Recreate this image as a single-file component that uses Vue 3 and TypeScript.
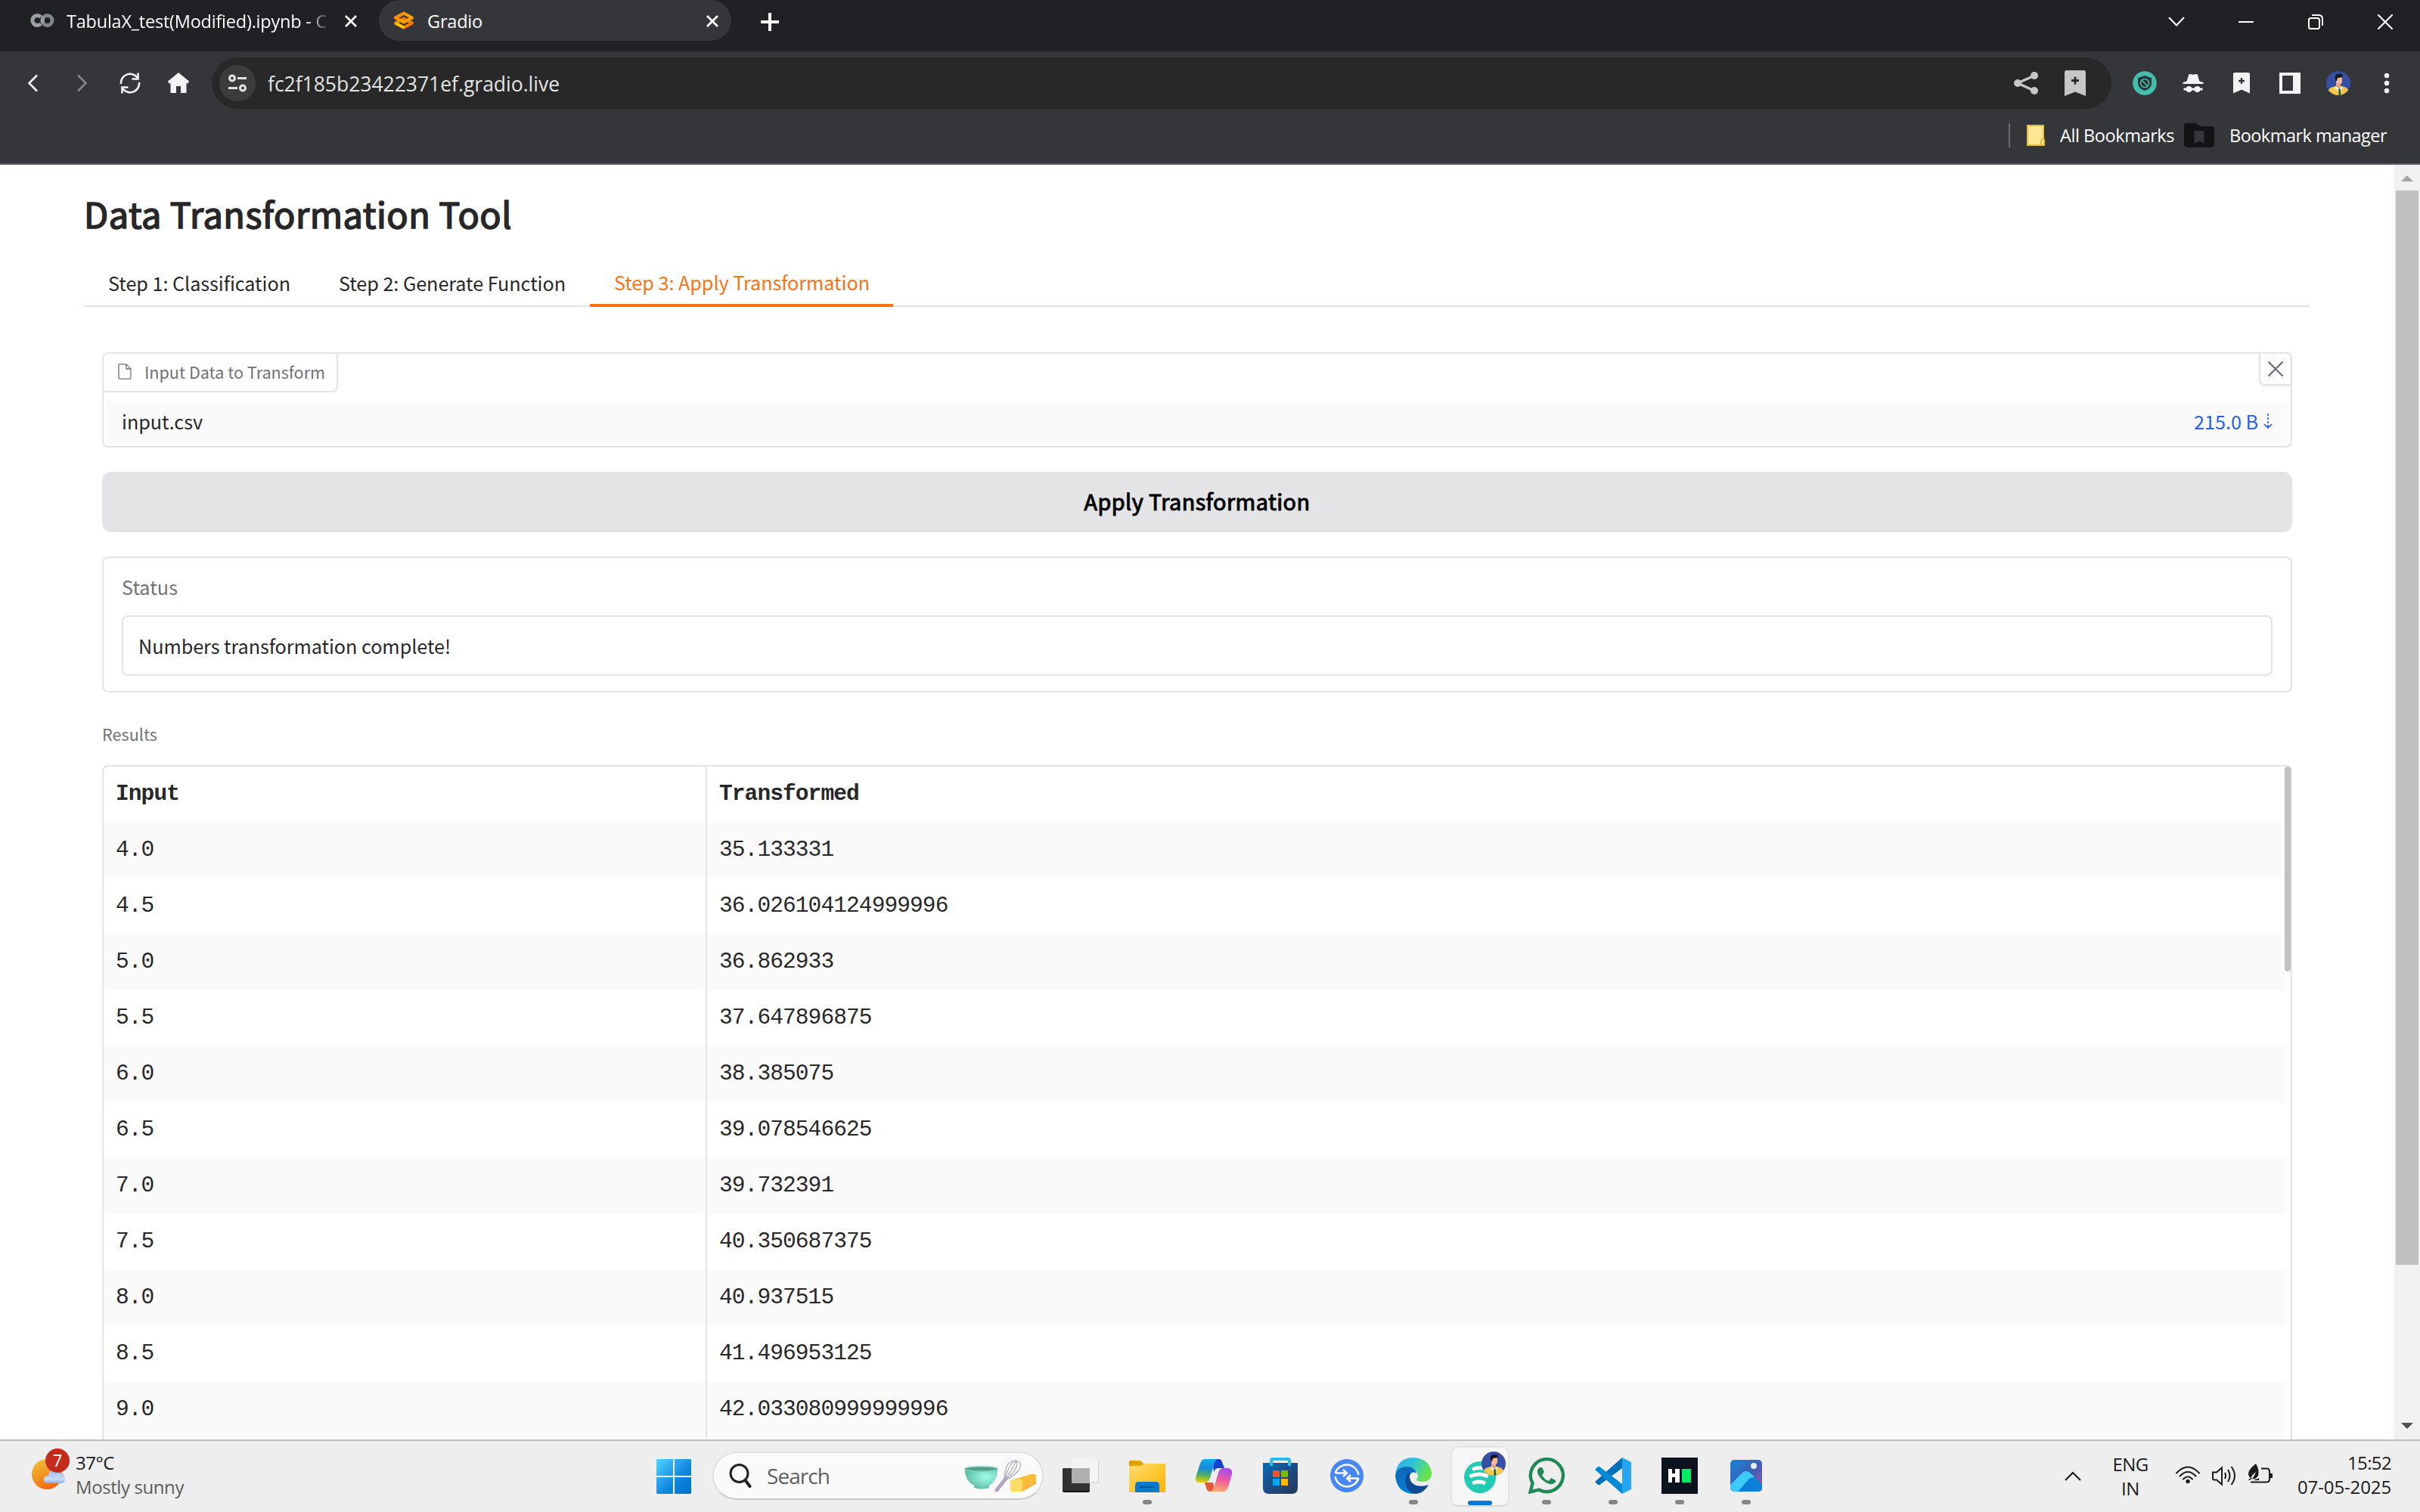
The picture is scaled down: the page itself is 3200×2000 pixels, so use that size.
<script setup lang="ts">
import type { Directive } from 'vue'

interface Row {
  input: string
  output: string
}

const rows: Row[] = [
  { input: '4.0', output: '35.133331' },
  { input: '4.5', output: '36.026104124999996' },
  { input: '5.0', output: '36.862933' },
  { input: '5.5', output: '37.647896875' },
  { input: '6.0', output: '38.385075' },
  { input: '6.5', output: '39.078546625' },
  { input: '7.0', output: '39.732391' },
  { input: '7.5', output: '40.350687375' },
  { input: '8.0', output: '40.937515' },
  { input: '8.5', output: '41.496953125' },
  { input: '9.0', output: '42.033080999999996' },
]

// Tracks a label in or out so that it takes the given advance width.
const vFit: Directive<HTMLElement, number> = {
  mounted(el, { value }) {
    const count = (el.textContent ?? '').length
    const natural = el.getBoundingClientRect().width
    el.style.letterSpacing = `${(value - natural) / count}px`
  },
}
</script>

<template>
  <div class="screen">
    <svg class="defs" width="0" height="0">
      <symbol id="avatar" viewBox="0 0 32 32">
        <clipPath id="round"><circle cx="16" cy="16" r="16" /></clipPath>
        <g clip-path="url(#round)">
          <rect width="32" height="32" fill="#364fa3" />
          <path d="M2 32v-5q1-5 10-7h9q8 2 9 7v5z" fill="#f8c64b" />
          <path d="M13 14h6v8l-3 2-3-2z" fill="#e8a184" />
          <path d="M12 20l5 3 4-3v3l-3 2-6-1z" fill="#fff" />
          <path d="M16.500 23h2l1 9h-3z" fill="#14614a" />
          <rect x="13" y="6" width="8" height="11" rx="3.500" fill="#f4b79b" />
          <path d="M12 13V8q-1-2 1-3 4-2 8-1l1 4-7 1-1 4z" fill="#17181c" />
        </g>
      </symbol>
    </svg>

    <header class="tabstrip">
      <div class="tab tab-colab">
        <svg width="32" height="20" viewBox="0 0 32 20" fill="none" stroke-width="5">
          <path d="M14 5.500A6.500 6.500 0 1 0 14 14.500" stroke="#9aa0a6" />
          <circle cx="22.500" cy="10" r="6.500" stroke="#80868b" />
          <path d="M17 13.500a6.500 6.500 0 0 1 1-8" stroke="#9aa0a6" />
        </svg>
        <span class="tab-title faded"><span v-fit="344">TabulaX_test(Modified).ipynb - C</span></span>
        <svg class="tab-x" width="18" height="18" viewBox="0 0 18 18"><path d="M2 2l14 14M16 2L2 16" stroke="#fff" stroke-width="2.800" /></svg>
      </div>
      <div class="tab tab-gradio">
        <svg width="28" height="24" viewBox="0 0 28 24" fill="none" stroke-width="4" stroke-linejoin="round">
          <path d="M3 15.500l11-6 11 6-11 6z" stroke="#ff7c00" />
          <path d="M3 8.500l11-6 11 6-11 6z" stroke="#ffa000" />
          <path d="M3 15.500l11 6" stroke="#ffc400" />
          <path d="M3 8.500l11-6" stroke="#ff8a00" />
        </svg>
        <span class="tab-title"><span v-fit="73">Gradio</span></span>
        <svg class="tab-x" width="18" height="18" viewBox="0 0 18 18"><path d="M2 2l14 14M16 2L2 16" stroke="#fff" stroke-width="2.800" /></svg>
      </div>
      <svg class="new-tab" width="26" height="26" viewBox="0 0 26 26"><path d="M13 1v24M1 13h24" stroke="#fff" stroke-width="4" /></svg>
      <div class="window-buttons">
        <span><svg width="24" height="16" viewBox="0 0 24 16"><path d="M2 2l10 10.500L22 2" fill="none" stroke="#fff" stroke-width="2" /></svg></span>
        <span><svg width="20" height="20" viewBox="0 0 20 20"><path d="M0 10h20" stroke="#fff" stroke-width="2" /></svg></span>
        <span>
          <svg width="20" height="20" viewBox="0 0 20 20" fill="none" stroke="#fff" stroke-width="2">
            <rect x="1" y="5" width="14" height="14" rx="2.500" /><path d="M5 1h9q5 0 5 5v9" />
          </svg>
        </span>
        <span><svg width="20" height="20" viewBox="0 0 20 20"><path d="M0 0l20 20M20 0L0 20" stroke="#fff" stroke-width="2" /></svg></span>
      </div>
    </header>

    <div class="toolbar">
      <nav class="nav-icons">
        <span><svg width="24" height="24" viewBox="0 0 24 24"><path d="M17 1.500L6.500 12 17 22.500" fill="none" stroke="#f1f3f4" stroke-width="2.600" /></svg></span>
        <span><svg width="24" height="24" viewBox="0 0 24 24"><path d="M7 1.500L17.500 12 7 22.500" fill="none" stroke="#85868a" stroke-width="2.600" /></svg></span>
        <span>
          <svg width="28" height="28" viewBox="0 0 28 28" fill="none" stroke="#f1f3f4" stroke-width="2.600">
            <path d="M2 15A12 12 0 0 1 23.500 6.500M24.500 0.500v8h-8M26 13A12 12 0 0 1 4.500 21.500M3.500 27.500v-8h8" />
          </svg>
        </span>
        <span><svg width="28" height="28" viewBox="0 0 28 28"><path d="M14 0L28 11.500l-1.500 3-2-.5V27h-7.500v-9h-6v9H3.500V14l-2 .5L0 11.500z" fill="#f1f3f4" /></svg></span>
      </nav>
      <div class="omnibox">
        <span class="site-info">
          <svg width="26" height="24" viewBox="0 0 26 24" fill="none" stroke="#e3e3e3" stroke-width="3">
            <circle cx="6" cy="5.500" r="3.500" /><path d="M13 5.500h12M1 18.500h12" /><circle cx="20" cy="18.500" r="3.500" />
          </svg>
        </span>
        <span class="url"><span v-fit="386">fc2f185b23422371ef.gradio.live</span></span>
        <svg class="share" width="34" height="30" viewBox="0 0 34 30" fill="#c7c7c7">
          <path d="M28 5L6 15l22 10" fill="none" stroke="#c7c7c7" stroke-width="3.500" />
          <circle cx="6" cy="15" r="5" /><circle cx="28" cy="5" r="5" /><circle cx="28" cy="25" r="5" />
        </svg>
        <svg width="28" height="34" viewBox="0 0 28 34">
          <path d="M3 0h22q3 0 3 3v31L14 28.500 0 34V3q0-3 3-3z" fill="#c7c7c7" /><path d="M14 8.500v10M9 13.500h10" stroke="#282828" stroke-width="2.800" />
        </svg>
      </div>
      <div class="extensions">
        <span>
          <svg width="32" height="32" viewBox="0 0 32 32" fill="none">
            <circle cx="16" cy="16" r="15.800" fill="#45bdac" />
            <path d="M16 6l9 3v7q0 7-9 10-9-3-9-10V9z" fill="#2c3135" />
            <circle cx="16" cy="16" r="5.500" stroke="#45bdac" stroke-width="1.600" /><path d="M12 12l8 8" stroke="#45bdac" stroke-width="1.600" />
          </svg>
        </span>
        <span>
          <svg width="28" height="26" viewBox="0 0 28 26" fill="#f1f3f4">
            <path d="M8.500 1h2l3.500.8L17.500 1h2l3 9.500 5 1.500v2H.5v-2l5-1.500z" />
            <circle cx="8.500" cy="21" r="4" /><circle cx="19.500" cy="21" r="4" /><path d="M1.500 19.500h25v3h-25z" />
          </svg>
        </span>
        <span>
          <svg width="22" height="28" viewBox="0 0 22 28">
            <path d="M2 0h18q2 0 2 2v25.500L11 22.500 0 27.500V2q0-2 2-2z" fill="#f1f3f4" /><path d="M11 7v8M7 11h8" stroke="#35363a" stroke-width="2.400" />
          </svg>
        </span>
        <span><svg width="28" height="28" viewBox="0 0 28 28"><path d="M0 0h28v28H0zM4 4v20h14V4z" fill="#f1f3f4" fill-rule="evenodd" /></svg></span>
        <span><svg width="32" height="32"><use href="#avatar" /></svg></span>
        <span><svg width="8" height="28" viewBox="0 0 8 28" fill="#f1f3f4"><circle cx="4" cy="4" r="3.200" /><circle cx="4" cy="14" r="3.200" /><circle cx="4" cy="24" r="3.200" /></svg></span>
      </div>
    </div>

    <div class="bookmarks">
      <i class="divider"></i>
      <svg width="24" height="28" viewBox="0 0 24 28"><path d="M1 1h21v18l1 1v7H1z" fill="#ffe793" stroke="#e9bd3f" stroke-width="2" /><path d="M19 27v-7q0-1 3-1" fill="none" stroke="#e9bd3f" stroke-width="2" /></svg>
      <span class="all"><span v-fit="151">All Bookmarks</span></span>
      <svg class="dark-folder" width="42" height="34" viewBox="0 0 42 34"><path d="M4 1h13l5 4h15q4 0 4 4v19q0 5-5 5H6q-5 0-5-5V4q0-3 3-3z" fill="#121314" /><path d="M14.500 11h13v17L21 24.500 14.500 28z" fill="#35363a" /></svg>
      <span class="manager"><span v-fit="208">Bookmark manager</span></span>
    </div>

    <div class="viewport">
      <main class="page">
        <h1><span v-fit="566">Data Transformation Tool</span></h1>
        <nav class="steps">
          <button><span v-fit="241">Step 1: Classification</span></button>
          <button><span v-fit="300">Step 2: Generate Function</span></button>
          <button class="active"><span v-fit="338">Step 3: Apply Transformation</span></button>
        </nav>

        <div class="panel">
          <section class="file">
            <div class="file-head">
              <div class="file-label">
                <svg width="18" height="21" viewBox="0 0 18 21" fill="none" stroke="#71717a" stroke-width="1.300">
                  <path d="M2.500.8H11L17 7v12q0 1.200-1.500 1.200H2.500Q1 20.200 1 19V2Q1 .8 2.500.8zM11 .8V7h6" />
                </svg>
                <span v-fit="239">Input Data to Transform</span>
              </div>
              <button class="clear"><svg width="22" height="22" viewBox="0 0 22 22"><path d="M1.500 1.500l19 19M20.500 1.500l-19 19" stroke="#6b6b75" stroke-width="2.200" /></svg></button>
            </div>
            <div class="file-row">
              <span v-fit="107">input.csv</span>
              <a class="size"><span v-fit="85">215.0 B</span>
                <svg width="12" height="22" viewBox="0 0 12 22" fill="none" stroke="#2563eb" stroke-width="1.700"><path d="M6 1v18" stroke-dasharray="3 2" /><path d="M1 15l5 5 5-5" /></svg>
              </a>
            </div>
          </section>

          <button class="apply"><span v-fit="299">Apply Transformation</span></button>

          <section class="status">
            <label><span v-fit="74">Status</span></label>
            <div class="field"><span v-fit="413">Numbers transformation complete!</span></div>
          </section>

          <p class="results-label"><span v-fit="73">Results</span></p>

          <section class="table">
            <div class="cells">
              <div class="tr th"><span>Input</span><span>Transformed</span></div>
              <div v-for="row in rows" :key="row.input" class="tr">
                <span>{{ row.input }}</span><span>{{ row.output }}</span>
              </div>
            </div>
            <div class="table-thumb"></div>
          </section>
        </div>
      </main>
      <aside class="scrollbar">
        <svg width="16" height="8" viewBox="0 0 16 8"><path d="M0 8L8 0l8 8z" fill="#a3a3a3" /></svg>
        <i></i>
        <svg class="down" width="16" height="8" viewBox="0 0 16 8"><path d="M0 0l8 8 8-8z" fill="#505050" /></svg>
      </aside>
    </div>

    <footer class="taskbar">
      <div class="weather">
        <svg width="52" height="56" viewBox="0 0 52 56">
          <defs>
            <linearGradient id="sun" x1="0.200" y1="0" x2="0.700" y2="1"><stop offset="0" stop-color="#edc037" /><stop offset="1" stop-color="#f4640b" /></linearGradient>
            <linearGradient id="cloud" x1="0" y1="0" x2="0" y2="1"><stop offset="0" stop-color="#9fbdf0" /><stop offset=".7" stop-color="#c9dbf7" /><stop offset="1" stop-color="#88aeed" /></linearGradient>
          </defs>
          <circle cx="20" cy="34" r="20" fill="url(#sun)" />
          <path d="M22 46q-6 0-6-5t6-5q1-8 8-8 6 0 8 5 6 0 6 7 0 6-6 6z" fill="url(#cloud)" />
          <circle cx="34" cy="16" r="16" fill="#c42b1c" />
          <text x="34" y="24" text-anchor="middle" font-size="22" fill="#fff">7</text>
        </svg>
        <div class="weather-text">
          <span><b v-fit="51">37°C</b></span>
          <span class="dim"><b v-fit="143">Mostly sunny</b></span>
        </div>
      </div>

      <svg class="start" width="46" height="46" viewBox="0 0 46 46">
        <defs><linearGradient id="win" x1="0" y1="0" x2="1" y2="1"><stop offset="0" stop-color="#4fd5ff" /><stop offset=".6" stop-color="#0d86dc" /><stop offset="1" stop-color="#0070cc" /></linearGradient></defs>
        <path d="M1 0h21v22H0V1zM24 0h21l1 1v21H24zM0 24h22v22H1l-1-1zM24 24h22v21l-1 1H24z" fill="url(#win)" />
      </svg>

      <div class="search">
        <svg width="30" height="32" viewBox="0 0 30 32" fill="none" stroke="#222">
          <circle cx="13.500" cy="13" r="11.500" stroke-width="3" /><path d="M21.500 22l6 8" stroke-width="4" stroke-linecap="round" />
        </svg>
        <span class="search-text"><span v-fit="83">Search</span></span>
        <svg class="bake" width="96" height="44" viewBox="0 0 96 44" fill="none">
          <defs>
            <radialGradient id="bowl" cx=".65" cy=".4" r=".7"><stop offset="0" stop-color="#a0ffe8" /><stop offset="1" stop-color="#5bb79f" /></radialGradient>
            <linearGradient id="butter" x1="0" y1="0" x2="1" y2="1"><stop offset="0" stop-color="#f2c92e" /><stop offset="1" stop-color="#ffae4b" /></linearGradient>
          </defs>
          <path d="M1 13h43q0 16-11 22v3q-10 3-20 0v-3Q1 29 1 13z" fill="url(#bowl)" />
          <ellipse cx="22.500" cy="13" rx="21.500" ry="3" fill="#4f9f8b" stroke="#7ccdb8" stroke-width="1.500" />
          <g stroke="#aca6ba" stroke-width="1.200">
            <path d="M53 26Q54 2 68 2q11 3 3 14-6 7-15 11M54 25Q60 4 69 2q4 10-13 24M54 26Q64 14 69 2" />
          </g>
          <path d="M55 26L43 41" stroke="#b0a7c2" stroke-width="5" stroke-linecap="round" />
          <path d="M62 28l26-8q7-1 7 2v11L77 43H64z" fill="url(#butter)" /><rect x="61" y="27" width="16" height="16" rx="2" fill="#ffdc68" />
        </svg>
      </div>

      <div class="apps">
        <span class="app">
          <svg width="48" height="48" viewBox="0 0 48 48">
            <rect y="14" width="36" height="32" rx="2" fill="#101010" /><rect y="14" width="36" height="30" rx="2" fill="#333" />
            <rect x="12" y="2" width="36" height="32" rx="2" fill="#d3d3d3" /><rect x="12" y="2" width="35" height="30.500" rx="2" fill="#f4f4f4" /><path d="M12 14h24v20H12z" fill="#b0b0b0" />
          </svg>
        </span>
        <span class="app running">
          <svg width="48" height="48" viewBox="0 0 48 48">
            <defs><linearGradient id="folder" x1="0" y1="0" x2="1" y2="1"><stop offset="0" stop-color="#ffdc71" /><stop offset="1" stop-color="#f9b500" /></linearGradient></defs>
            <path d="M1 4h14l5 5v6H0V5z" fill="#dfa000" /><path d="M0 11l16-.5 5-2.500h26l1 1v37H0z" fill="url(#folder)" />
            <path d="M8 46V37q0-5 5-5h22q5 0 5 5v9z" fill="#0d79cb" /><path d="M15 39h17" stroke="#07539c" stroke-width="2.200" stroke-linecap="round" />
          </svg>
        </span>
        <span class="app">
          <svg width="48" height="48" viewBox="0 0 48 48">
            <defs>
              <linearGradient id="cpa" x1=".5" y1="0" x2=".4" y2="1"><stop offset="0" stop-color="#16a7ef" /><stop offset=".4" stop-color="#158bd7" /><stop offset=".7" stop-color="#4fb35c" /><stop offset="1" stop-color="#f1cb00" /></linearGradient>
              <linearGradient id="cpb" x1=".6" y1="0" x2=".4" y2="1"><stop offset="0" stop-color="#a44df1" /><stop offset=".5" stop-color="#ee5a9b" /><stop offset="1" stop-color="#ffac6e" /></linearGradient>
            </defs>
            <path d="M22 2h8q4 0 5 4l3 8h-8q-4 0-6 5z" fill="#173fc7" />
            <path d="M12 33h11l2 10q-1 2-5 2-5 0-6-5z" fill="#e9563a" />
            <path d="M12 2h17q-3 1-5 8l-5 17q-2 6-7 6H5q-6 0-5-7L6 8q2-6 6-6z" fill="url(#cpa)" />
            <path d="M36 14h6q7 0 6 8l-5 17q-2 6-7 6H19q4-1 6-8l5-17q2-6 6-6z" fill="url(#cpb)" />
          </svg>
        </span>
        <span class="app">
          <svg width="48" height="48" viewBox="0 0 48 48">
            <defs><linearGradient id="store" x1="0" y1="0" x2="1" y2="1"><stop offset="0" stop-color="#0b68b4" /><stop offset="1" stop-color="#2a3558" /></linearGradient></defs>
            <path d="M1 7h46v33q0 8-8 8H9q-8 0-8-8z" fill="url(#store)" />
            <path d="M12 11V4q0-2 2-2h20q2 0 2 2v7" fill="none" stroke="#26bdf0" stroke-width="4" />
            <path d="M14 17h9v9h-9z" fill="#f25022" /><path d="M25 17h9v9h-9z" fill="#7fba00" /><path d="M14 28h9v9h-9z" fill="#00a4ef" /><path d="M25 28h9v9h-9z" fill="#ffb900" />
          </svg>
        </span>
        <span class="app">
          <svg width="48" height="48" viewBox="0 0 48 48" fill="none" stroke="#fff" stroke-width="2.400">
            <circle cx="24" cy="24" r="22" fill="#4687f4" stroke="none" />
            <path d="M8.500 20.500A16 16 0 0 1 39.500 23M8.500 20.500H23M19 16l5 4.500-5 4.500M39.500 27.500A16 16 0 0 1 8.500 25M39.500 27.500H25M29 23l-5 4.500 5 4.500" />
          </svg>
        </span>
        <span class="app running">
          <svg width="48" height="48" viewBox="0 0 48 48">
            <defs>
              <linearGradient id="ea" x1="0" y1="0" x2="1" y2=".4"><stop offset="0" stop-color="#2aa9ee" /><stop offset=".5" stop-color="#30c3d5" /><stop offset="1" stop-color="#67e44c" /></linearGradient>
              <linearGradient id="eb" x1="0" y1="0" x2=".6" y2="1"><stop offset="0" stop-color="#1260ae" /><stop offset="1" stop-color="#0089e3" /></linearGradient>
            </defs>
            <path d="M0 24Q2 11 14 11q12 0 14 10-6-4-9 3-1 14 12 16 8 0 12-4Q37 48 24 48 2 47 0 24z" fill="url(#eb)" />
            <path d="M13 32q0-10 6-13-2 14 9 18 9 2 16-1-6 11-17 12-13-3-14-16z" fill="#0f4a92" />
            <path d="M0 22Q3 0 24 0q21 1 24 20 0 11-11 12-9 0-9-3 3-4 1-9-5-9-15-8Q3 13 0 22z" fill="url(#ea)" />
          </svg>
        </span>
        <span class="app current">
          <svg width="60" height="60" viewBox="0 0 60 60">
            <circle cx="24" cy="34" r="21" fill="#22cbb2" />
            <g fill="none" stroke="#fff" stroke-width="5"><path d="M14 24q8-5 21 0M10.500 33q13-6 24 0" /><path d="M14 42q9-4 17 0" /></g>
            <use href="#avatar" x="26" y="0" width="32" height="32" />
          </svg>
        </span>
        <span class="app running">
          <svg width="48" height="48" viewBox="0 0 48 48">
            <path d="M2.500 45.500l3-11.500A21.500 21.500 0 1 1 14 42.500z" fill="none" stroke="#1f8a55" stroke-width="4.400" />
            <path d="M15 13h3l3 6-3 4q3 6 9 8l3-4 6 3q1 4-5 5-5 1-12-5-8-7-7-13 1-3 3-4z" fill="#1f8a55" />
          </svg>
        </span>
        <span class="app running">
          <svg width="48" height="48" viewBox="0 0 48 48">
            <path d="M0 32l4 4 2 .2L36 14V0z" fill="#0070b8" />
            <path d="M0 16l4-4h2l30 23v13z" fill="#008bd4" /><path d="M36 0l12 6v36l-12 6z" fill="#27a5f2" />
          </svg>
        </span>
        <span class="app running">
          <svg width="48" height="48" viewBox="0 0 48 48">
            <rect width="48" height="48" fill="#0b131e" />
            <path d="M9 15h5v6h4v-6h6v18h-6v-7h-4v7H9z" fill="#fff" /><path d="M27 15h12v18H27z" fill="#00ea64" />
          </svg>
        </span>
        <span class="app running">
          <svg width="48" height="48" viewBox="0 0 48 48">
            <defs>
              <linearGradient id="pa" x1="0" y1="0" x2="1" y2="1"><stop offset="0" stop-color="#1784da" /><stop offset=".5" stop-color="#3b61b7" /><stop offset="1" stop-color="#a052ad" /></linearGradient>
              <clipPath id="pc"><rect x="3" y="3" width="42" height="42" rx="5" /></clipPath>
            </defs>
            <g clip-path="url(#pc)">
              <rect x="3" y="3" width="42" height="42" fill="url(#pa)" /><path d="M12 45l16-18q4-3 8 0l12 12v8z" fill="#0b80d8" />
              <path d="M3 36l16-16q5-4 10 0l6 6q-4 0-7 2L13 45H3z" fill="#3ccbf7" /><circle cx="34" cy="11" r="4" fill="#e8ecf2" />
            </g>
          </svg>
        </span>
      </div>

      <div class="tray">
        <svg class="caret" width="22" height="13" viewBox="0 0 22 13"><path d="M1 12L11 2l10 10" fill="none" stroke="#1b1b1b" stroke-width="2.200" /></svg>
        <div class="lang"><span><b v-fit="47">ENG</b></span><span><b v-fit="24">IN</b></span></div>
        <svg class="wifi" width="32" height="24" viewBox="0 0 32 24" fill="none" stroke="#1b1b1b" stroke-width="2" stroke-linecap="round">
          <path d="M1 9.500Q16-6.500 31 9.500M5.500 13.500q10.500-11 21 0M10 17.500q6-6.500 12 0" /><circle cx="16" cy="20.500" r="2" fill="#1b1b1b" stroke-width="1.400" />
        </svg>
        <svg class="sound" width="32" height="28" viewBox="0 0 32 28" fill="none" stroke="#1b1b1b" stroke-width="2">
          <path d="M1 9.500h5l7-6v22l-7-6H3q-2 0-2-2z" /><path d="M17 10q2 4 0 8M21 6q5 8 0 16M25.500 2q9 12 0 24" />
        </svg>
        <svg class="battery" width="32" height="28" viewBox="0 0 32 28" fill="none" stroke="#1b1b1b" stroke-width="2">
          <path d="M17 7.500h7q4 0 4 4v10q0 4-4 4H3" /><path d="M28 14h4v6h-4z" fill="#1b1b1b" stroke="none" />
          <path d="M10 1Q0 9 0 14q0 4 3 6 3-5 7-8-2 6-5 9 5 1 8-4 2-8-3-16zM8 22q4 0 6-2v3H8z" fill="#1b1b1b" stroke="none" />
          <path d="M.5 22.500q2-.5 4-2.500" stroke-width="1.600" />
        </svg>
        <div class="clock"><span><b v-fit="58">15:52</b></span><span><b v-fit="124">07-05-2025</b></span></div>
      </div>
    </footer>
  </div>
</template>

<style>
body {
  margin: 0;
  overflow: hidden;
}
</style>

<style scoped>
* {
  box-sizing: border-box;
}
svg {
  display: block;
  flex: none;
}
button {
  margin: 0;
  border: 0;
  background: none;
  font: inherit;
  color: inherit;
}
b {
  font-weight: 400;
}
.defs {
  position: absolute;
}
.screen {
  display: flex;
  flex-direction: column;
  width: 3200px;
  height: 2000px;
  overflow: hidden;
  background: #fff;
  font-family: 'Open Sans', 'Noto Sans', sans-serif;
  white-space: nowrap;
}

/* browser chrome */
.tabstrip {
  display: flex;
  height: 68px;
  background: #202124;
  color: #fff;
  font-size: 23.500px;
}
.tab {
  display: flex;
  align-items: center;
  height: 54px;
}
.tab-title {
  padding-top: 1px;
  line-height: 32px;
}
.tab-colab {
  width: 501px;
  padding-left: 40px;
}
.tab-colab .tab-title {
  margin-left: 16px;
  width: 344px;
}
.tab-colab .tab-x {
  margin: 2px 0 0 23px;
}
.faded {
  -webkit-mask-image: linear-gradient(90deg, #000 320px, transparent 348px);
  mask-image: linear-gradient(90deg, #000 320px, transparent 348px);
}
.tab-gradio {
  width: 466px;
  padding-left: 19px;
  border-radius: 27px;
  background: #35363a;
}
.tab-gradio .tab-title {
  margin-left: 17px;
  width: 366px;
}
.tab-gradio .tab-x {
  margin: 2px 0 0 2px;
}
.new-tab {
  margin: 16px 0 0 38px;
}
.window-buttons {
  display: flex;
  height: 58px;
  margin-left: auto;
}
.window-buttons span {
  display: flex;
  align-items: center;
  justify-content: center;
  width: 92px;
}
.toolbar {
  display: flex;
  align-items: center;
  height: 84px;
  background: #35363a;
}
.nav-icons,
.extensions {
  display: flex;
}
.nav-icons {
  width: 268px;
  margin-left: 12px;
}
.nav-icons span,
.extensions span {
  display: flex;
  align-items: center;
  justify-content: center;
  width: 64px;
  height: 64px;
}
.omnibox {
  display: flex;
  align-items: center;
  width: 2512px;
  height: 68px;
  margin-right: 12px;
  padding: 0 34px 0 10px;
  border-radius: 34px;
  background: #282828;
}
.site-info {
  display: flex;
  align-items: center;
  justify-content: center;
  width: 48px;
  height: 48px;
  border-radius: 24px;
  background: #3c3c3c;
}
.url {
  margin-left: 16px;
  padding-top: 1px;
  color: #e3e3e3;
  font-size: 26.500px;
  line-height: 36px;
}
.share {
  margin: 0 34px 0 auto;
}
.bookmarks {
  display: flex;
  align-items: center;
  height: 66px;
  padding: 0 0 10px 2656px;
  border-bottom: 2px solid #5f6064;
  background: #35363a;
  color: #fff;
  font-size: 23.500px;
}
.divider {
  width: 2px;
  height: 32px;
  margin-right: 22px;
  background: #6b6c70;
}
.all {
  width: 163px;
  margin-left: 20px;
}
.manager {
  margin-left: 19px;
}

/* page */
.viewport {
  display: flex;
  height: 1686px;
  overflow: hidden;
}
.page {
  width: 3166px;
  padding: 0 111px;
  color: #27272a;
  font-family: 'Noto Sans CJK SC', 'Noto Sans', sans-serif;
  font-size: 25.200px;
}
h1 {
  margin: 33px 0 0;
  font-size: 46.800px;
  font-weight: 400;
  line-height: 62px;
  -webkit-text-stroke: 1.600px currentColor;
}
.steps {
  display: flex;
  height: 64px;
  margin-top: 29px;
  border-bottom: 2px solid #e4e4e7;
}
.steps button {
  height: 64px;
  padding: 1px 32px 2px;
}
.steps button.active {
  padding: 1px 31px 0 32px;
  border-bottom: 4px solid #f97316;
  color: #f97316;
}
.steps button span {
  display: inline-block;
  line-height: 36px;
}
.panel {
  padding: 60px 24px 0;
}
.file {
  height: 126px;
  border: 2px solid #e4e4e7;
  border-radius: 8px;
}
.file-head {
  display: flex;
  justify-content: space-between;
  height: 63px;
}
.file-label {
  display: flex;
  align-items: center;
  width: 310px;
  height: 51px;
  padding: 0 0 2px 19px;
  border: solid #e4e4e7;
  border-width: 0 2px 2px 0;
  border-radius: 0 0 8px 0;
  color: #71717a;
  font-size: 21.600px;
}
.file-label span {
  margin-left: 17px;
}
.clear {
  display: flex;
  align-items: center;
  justify-content: center;
  width: 42px;
  height: 42px;
  padding: 0;
  border: solid #e4e4e7;
  border-width: 0 0 2px 2px;
  border-radius: 0 0 0 8px;
  box-shadow: 0 2px 4px rgb(0 0 0 / 6%);
}
.file-row {
  display: flex;
  align-items: center;
  justify-content: space-between;
  height: 55px;
  margin: 0 4px;
  padding: 0 20px 3px;
  background: #fafafa;
}
.size {
  display: flex;
  align-items: center;
  gap: 7px;
  color: #2563eb;
}
.apply {
  display: block;
  width: 100%;
  height: 80px;
  margin-top: 32px;
  padding: 0 0 3px;
  border-radius: 12px;
  background: #e4e4e6;
  color: #000;
  font-size: 28.800px;
  text-align: center;
  -webkit-text-stroke: 1px currentColor;
}
.status {
  height: 180px;
  margin-top: 32px;
  padding: 22px 24px 0;
  border: 2px solid #e4e4e7;
  border-radius: 8px;
}
.status label {
  display: block;
  height: 54px;
  color: #71717a;
  line-height: 32px;
}
.field {
  height: 80px;
  padding-left: 20px;
  border: 2px solid #e4e4e7;
  border-radius: 8px;
  line-height: 76px;
}
.results-label {
  height: 96px;
  margin: 0;
  color: #71717a;
  font-size: 21.600px;
  line-height: 109px;
}
.table {
  display: flex;
  height: 1000px;
  border: 2px solid #e4e4e7;
  border-radius: 8px;
  font-family: 'Liberation Mono', monospace;
  font-size: 29.500px;
  letter-spacing: -0.900px;
}
.cells {
  width: 2884px;
}
.tr {
  display: flex;
  height: 74px;
  line-height: 73px;
}
.tr:nth-child(even) {
  background: #fafafa;
}
.tr span {
  padding-left: 16px;
}
.tr span:first-child {
  width: 798px;
  border-right: 2px solid #e4e4e7;
}
.th {
  font-weight: 700;
}
.table-thumb {
  width: 8px;
  height: 271px;
  border-radius: 4px;
  background: #c1c1c1;
}
.scrollbar {
  display: flex;
  flex-direction: column;
  align-items: center;
  width: 34px;
  padding: 14px 0;
  background: #f1f1f1;
}
.scrollbar i {
  width: 30px;
  height: 1421px;
  margin-top: 12px;
  background: #c1c1c1;
}
.down {
  margin-top: auto;
}

/* taskbar */
.taskbar {
  display: flex;
  height: 96px;
  border-top: 2px solid #bfbfbf;
  background: #eee;
  color: #1b1b1b;
  font-size: 24px;
  line-height: 32px;
}
.weather {
  display: flex;
  width: 868px;
  padding: 10px 0 0 42px;
}
.weather-text {
  display: flex;
  flex-direction: column;
  margin: 3px 0 0 6px;
}
.dim {
  color: #5c5c5c;
}
.start {
  margin-top: 24px;
}
.search {
  display: flex;
  align-items: center;
  width: 438px;
  height: 64px;
  margin: 14px 0 0 28px;
  padding-left: 20px;
  border: 2px solid #e0e0e0;
  border-bottom-color: #c8c8c8;
  border-radius: 32px;
  background: #fafafa;
}
.search-text {
  width: 261px;
  margin-left: 20px;
  color: #5f5f5f;
  font-size: 28px;
}
.apps {
  display: flex;
  height: 94px;
  margin-left: 5px;
}
.app {
  display: flex;
  flex-direction: column;
  align-items: center;
  width: 88px;
  padding-top: 22px;
}
.running::after,
.current::after {
  width: 12px;
  height: 6px;
  margin-top: 8px;
  border-radius: 3px;
  background: #868686;
  content: '';
}
.current {
  width: 78px;
  height: 80px;
  margin: 7px 5px 0;
  padding-top: 5px;
  border: 2px solid #e5e5e5;
  border-bottom-color: #d8d8d8;
  border-radius: 10px;
  background: #f7f7f7;
}
.current svg {
  margin-left: 12px;
}
.current::after {
  width: 32px;
  margin-top: 5px;
  background: #0078d4;
}
.tray {
  display: flex;
  margin-left: auto;
  padding-right: 38px;
}
.caret {
  margin-top: 40px;
}
.lang,
.clock {
  display: flex;
  flex-direction: column;
}
.lang {
  align-items: center;
  width: 48px;
  margin: 15px 0 0 41px;
}
.wifi {
  margin: 33px 0 0 36px;
}
.sound {
  margin: 32px 0 0 16px;
}
.battery {
  margin: 29px 0 0 16px;
}
.clock {
  align-items: flex-end;
  width: 124px;
  margin: 13px 0 0 33px;
}
</style>
